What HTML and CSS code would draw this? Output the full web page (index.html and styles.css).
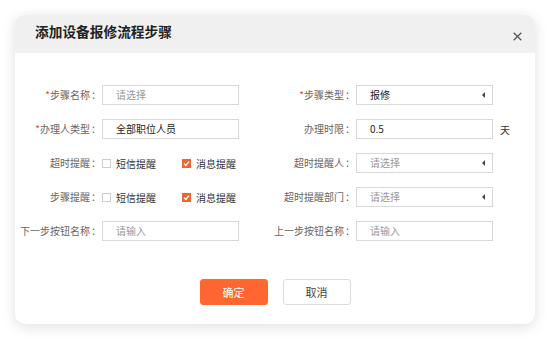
FILE: index.html
```html
<!DOCTYPE html>
<html lang="zh-CN">
<head>
<meta charset="utf-8">
<title>添加设备报修流程步骤</title>
<link rel="stylesheet" href="styles.css">
</head>
<body>
<div class="dialog">
  <div class="dialog-header">
    <span class="dialog-title">添加设备报修流程步骤</span>
    <span class="dialog-close">
      <svg width="9" height="9" viewBox="0 0 9 9"><path d="M0.7 0.7 L8.3 8.3 M8.3 0.7 L0.7 8.3" stroke="#555" stroke-width="1.3" fill="none"/></svg>
    </span>
  </div>
  <div class="dialog-body">
    <div class="form-grid">
      <label class="label"><span class="req">*</span>步骤名称<span class="colon">：</span></label>
      <div class="input placeholder">请选择</div>
      <label class="label"><span class="req">*</span>步骤类型<span class="colon">：</span></label>
      <div class="input select">报修<span class="arrow"></span></div>
      <span class="suffix"></span>

      <label class="label"><span class="req">*</span>办理人类型<span class="colon">：</span></label>
      <div class="input">全部职位人员</div>
      <label class="label">办理时限<span class="colon">：</span></label>
      <div class="input">0.5</div>
      <span class="suffix">天</span>

      <label class="label">超时提醒<span class="colon">：</span></label>
      <div class="checks">
        <span class="check"><span class="box"></span>短信提醒</span>
        <span class="check"><span class="box checked"><svg width="9" height="9" viewBox="0 0 9 9"><path d="M2 4.6 L3.8 6.4 L7 2.6" stroke="#fff" stroke-width="1.4" fill="none"/></svg></span>消息提醒</span>
      </div>
      <label class="label">超时提醒人<span class="colon">：</span></label>
      <div class="input select placeholder">请选择<span class="arrow"></span></div>
      <span class="suffix"></span>

      <label class="label">步骤提醒<span class="colon">：</span></label>
      <div class="checks">
        <span class="check"><span class="box"></span>短信提醒</span>
        <span class="check"><span class="box checked"><svg width="9" height="9" viewBox="0 0 9 9"><path d="M2 4.6 L3.8 6.4 L7 2.6" stroke="#fff" stroke-width="1.4" fill="none"/></svg></span>消息提醒</span>
      </div>
      <label class="label">超时提醒部门<span class="colon">：</span></label>
      <div class="input select placeholder">请选择<span class="arrow"></span></div>
      <span class="suffix"></span>

      <label class="label">下一步按钮名称<span class="colon">：</span></label>
      <div class="input placeholder">请输入</div>
      <label class="label">上一步按钮名称<span class="colon">：</span></label>
      <div class="input placeholder">请输入</div>
      <span class="suffix"></span>
    </div>
    <div class="actions">
      <button class="btn btn-primary">确定</button>
      <button class="btn btn-default">取消</button>
    </div>
  </div>
</div>
</body>
</html>
```

FILE: styles.css
```css
* { box-sizing: border-box; }
html, body { margin: 0; padding: 0; background: #fff; }
body {
  font-family: "Noto Sans CJK SC", "Noto Sans", sans-serif;
  text-spacing-trim: space-all;
  width: 550px;
  height: 340px;
  overflow: hidden;
}
.dialog {
  margin: 15px 0 0 15px;
  width: 520px;
  height: 309px;
  background: #fff;
  border-radius: 10px;
  box-shadow: 0 3px 14px rgba(0, 0, 0, 0.13);
  overflow: hidden;
}
.dialog-header {
  height: 38px;
  background: #f0f0f0;
  display: flex;
  align-items: center;
  justify-content: space-between;
  padding: 0 12px 0 20px;
}
.dialog-title {
  font-size: 13.7px;
  font-weight: bold;
  color: #222;
  line-height: 1;
  margin-top: -5px;
}
.dialog-close {
  display: flex;
  margin-top: 5px;
  margin-right: 1px;
}
.dialog-body {
  padding-top: 32px;
}
.form-grid {
  display: grid;
  grid-template-columns: 87px 137px 117px 137px auto;
  grid-auto-rows: 20px;
  row-gap: 14px;
  align-items: center;
  font-size: 10px;
}
.label {
  text-align: right;
  color: #666;
  white-space: nowrap;
  line-height: 20px;
}
.colon {
  display: inline-block;
  width: 12px;
  text-align: center;
}
.req { color: #f04030; }
.input {
  height: 20px;
  border: 1px solid #d9d9d9;
  padding-left: 13px;
  line-height: 18px;
  color: #222;
  position: relative;
}
.input.placeholder { color: #999; }
.arrow {
  position: absolute;
  right: 7px;
  top: 6px;
  width: 0;
  height: 0;
  border-top: 3px solid transparent;
  border-bottom: 3px solid transparent;
  border-right: 3px solid #444;
}
.suffix {
  padding-left: 7px;
  color: #333;
}
.checks {
  display: flex;
  gap: 26px;
}
.check {
  display: flex;
  align-items: center;
  gap: 5px;
  color: #333;
}
.box {
  width: 9px;
  height: 9px;
  border: 1px solid #ccc;
  display: flex;
}
.box.checked {
  background: #f5622e;
  border-color: #f5622e;
}
.box.checked svg { margin: -1px; }
.actions {
  display: flex;
  justify-content: center;
  gap: 15px;
  margin-top: 38px;
}
.btn {
  width: 68px;
  height: 26px;
  border-radius: 3px;
  font-family: inherit;
  font-size: 11px;
  padding: 0;
  cursor: pointer;
}
.btn-primary {
  background: #ff6630;
  border: 1px solid #ff6630;
  color: #fff;
}
.btn-default {
  background: #fff;
  border: 1px solid #dcdcdc;
  color: #444;
}
```
